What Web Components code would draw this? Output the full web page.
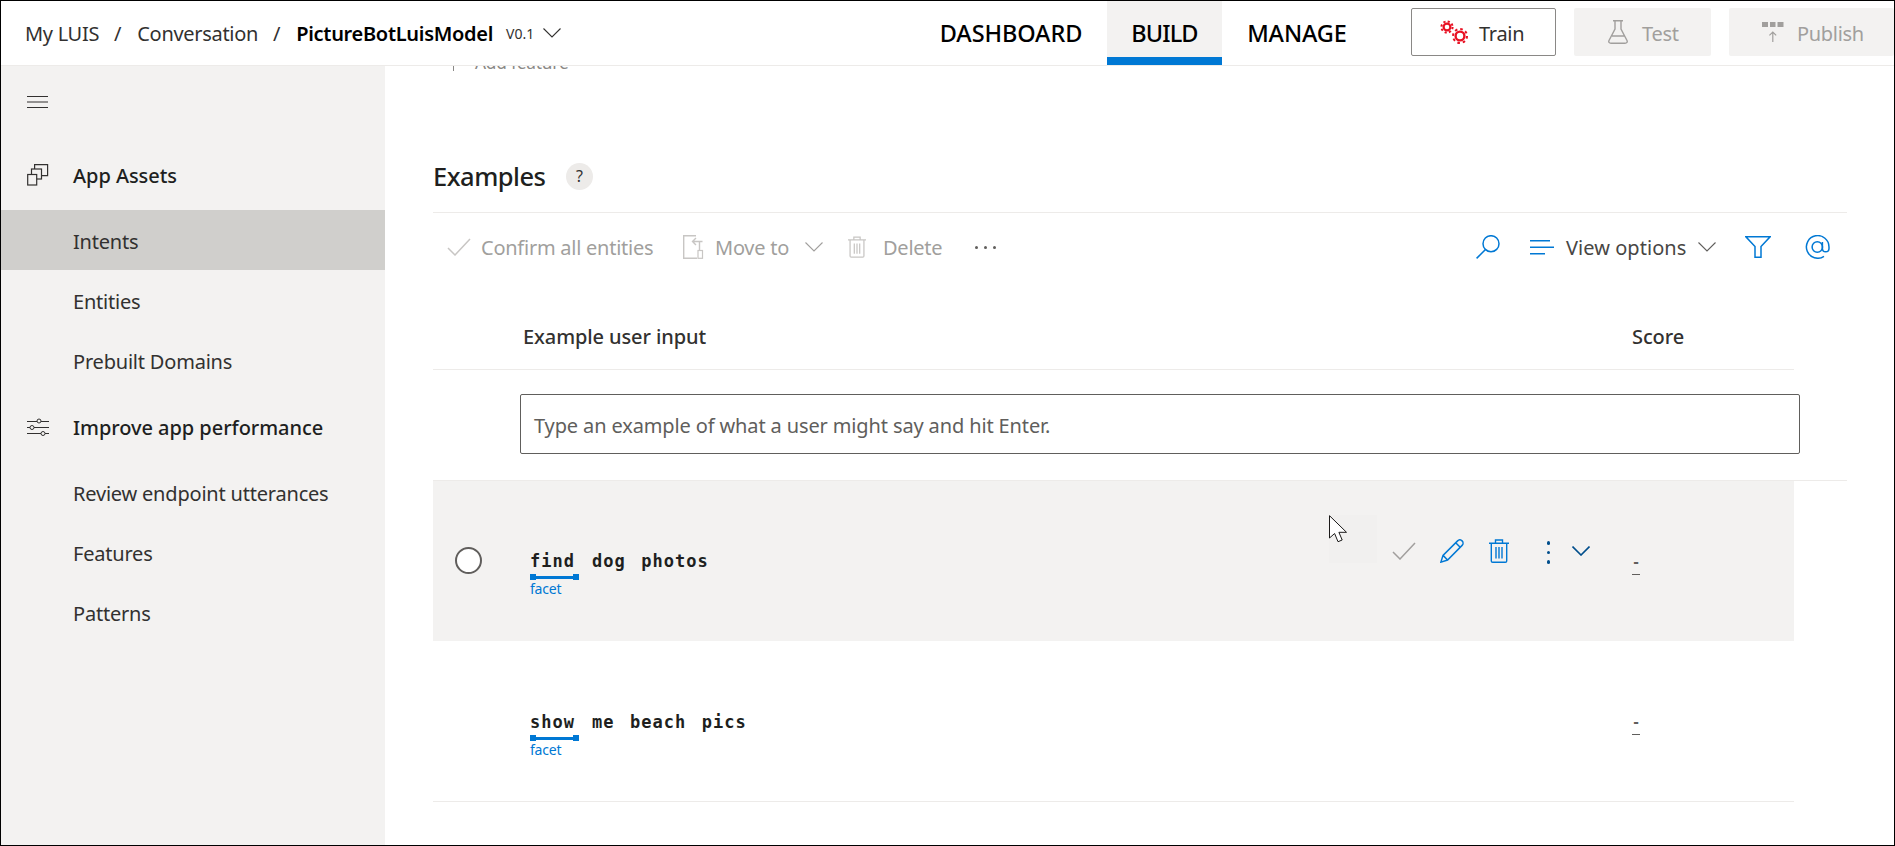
<!DOCTYPE html>
<html>
<head>
<meta charset="utf-8">
<title>LUIS - Intents</title>
<style>
  html, body { margin: 0; padding: 0; height: 100%; background: #fff; }
  body { font-family: "Noto Sans", "Liberation Sans", sans-serif; overflow: hidden; }
</style>
</head>
<body>
<luis-app></luis-app>
<script>
(function () {
  const BLUE = "#0078d4";
  const GREY = "#c8c6c4";

  // inline icons, sizes follow the screenshot
  const ICONS = {
    chevron: (w, h, c, sw = 1.1) => `<svg width="${w}" height="${h}" viewBox="0 0 18 10" fill="none" stroke="${c}" stroke-width="${sw}"><path d="M.5 .5 9 9 17.5 .5"/></svg>`,
    check: (c) => `<svg width="24" height="18" viewBox="0 0 24 18" fill="none" stroke="${c}" stroke-width="1.5"><path d="M1 10 8 17 23 1"/></svg>`,
    gears: () => `<svg width="33" height="30" viewBox="0 0 33 30" fill="none" stroke="#e81123">
      <circle cx="8" cy="10" r="3.4" stroke-width="2.2"/><circle cx="8" cy="10" r="5.6" stroke-width="2" stroke-dasharray="2.2 2.2"/>
      <circle cx="21" cy="19" r="4.4" stroke-width="2.4"/><circle cx="21" cy="19" r="7" stroke-width="2" stroke-dasharray="2.6 2.9"/></svg>`,
    flask: () => `<svg width="20" height="24" viewBox="0 0 20 24" fill="none" stroke="#a19f9d" stroke-width="1.4"><path d="M5 .7H15M7 .7V9L1 20.5C.3 22 1.2 23.3 3 23.3H17C18.8 23.3 19.7 22 19 20.5L13 9V.7M4 16H16"/></svg>`,
    publish: () => `<svg width="22" height="20" viewBox="0 0 22 20" fill="#a19f9d"><rect x="0" y="0" width="6" height="5"/><rect x="8" y="0" width="5.5" height="5"/><rect x="15.5" y="0" width="6" height="5"/><path d="M10.2 20V11.5L7.8 13.8 7 13 10.8 9.2 14.6 13 13.8 13.8 11.4 11.5V20Z"/></svg>`,
    menu: () => `<svg width="21" height="12" viewBox="0 0 21 12" stroke="#323130" stroke-width="1"><path d="M0 .5H21M0 6H21M0 11.5H21"/></svg>`,
    assets: () => `<svg width="22" height="22" viewBox="0 0 22 22" fill="none" stroke="#323130" stroke-width="1.2"><path d="M7.6 7.5V.7H20.6V11.7H14.5"/><rect x="4.5" y="5" width="10" height="10" fill="#f3f2f1"/><rect x=".7" y="10.5" width="9" height="10.5" fill="#f3f2f1"/></svg>`,
    sliders: () => `<svg width="22" height="19" viewBox="0 0 22 19" fill="none" stroke="#323130" stroke-width="1"><path d="M0 3.5H10M14 3.5H22M0 9.5H3M7 9.5H22M0 15.5H14M18 15.5H22"/><circle cx="12" cy="3" r="2"/><circle cx="5" cy="9.5" r="2"/><circle cx="16" cy="15.5" r="2"/></svg>`,
    move: () => `<svg width="21" height="24" viewBox="0 0 21 24" fill="none" stroke="${GREY}" stroke-width="1.4"><path d="M13 .7H.7V23.3H14M19.5 6.5H10M13 3 9.5 6.5 13 10M16.5 6.5V15"/><rect x="15" y="15.5" width="4.5" height="7.8" stroke-width="1.2"/></svg>`,
    trash: (w, h, c) => `<svg width="${w}" height="${h}" viewBox="0 0 20 24" fill="none" stroke="${c}" stroke-width="1.4"><path d="M0 4.2H20M6.5 4V1H13.5V4M2.3 4.2V22A1.3 1.3 0 0 0 3.6 23.3H16.4A1.3 1.3 0 0 0 17.7 22V4.2M7 8V19.5M10 8V19.5M13 8V19.5"/></svg>`,
    search: () => `<svg width="24" height="24" viewBox="0 0 24 24" fill="none" stroke="${BLUE}" stroke-width="1.5"><circle cx="15" cy="8.7" r="8"/><path d="M9.5 14.5 .6 23.4"/></svg>`,
    lines: () => `<svg width="24" height="15" viewBox="0 0 24 15" stroke="${BLUE}" stroke-width="1.5"><path d="M0 .8H20M0 7.2H24M0 13.8H15"/></svg>`,
    funnel: () => `<svg width="26" height="22" viewBox="0 0 26 22" fill="none" stroke="${BLUE}" stroke-width="1.5"><path d="M.9 .8H25.1L16 10.5V21.2H10V10.5Z"/></svg>`,
    at: () => `<svg width="25" height="24" viewBox="0 0 25 24" fill="none" stroke="${BLUE}" stroke-width="1.5"><path d="M19 21.3A11.3 11.3 0 1 1 24 12V13.5A3.3 3.3 0 0 1 17.4 13.5V7"/><circle cx="12.3" cy="12" r="5.2"/></svg>`,
    pencil: () => `<svg width="24" height="24" viewBox="0 0 24 24" fill="none" stroke="${BLUE}" stroke-width="1.5"><path d="M.9 23.1 3 16.4 17.6 1.9A2.9 2.9 0 0 1 22.1 6.4L7.6 21ZM3 16.4 7.6 21M15.7 3.8 20.2 8.3"/></svg>`,
    cursor: () => `<svg width="19" height="28" viewBox="0 0 19 28" fill="#fff" stroke="#1b1a19" stroke-width="1"><path d="M.5 .7V23L5.6 18.5 9 26.7 13.2 25 9.9 17.3H17.5Z"/></svg>`
  };

  class LuisHeader extends HTMLElement {
    constructor() {
      super();
      this.attachShadow({ mode: "open" });
      this.shadowRoot.innerHTML = `
        <style>
          :host { display: flex; height: 64px; border-bottom: 1px solid #edebe9; background: #fff; color: #323130; }
          .crumbs { flex: 1; display: flex; align-items: center; padding-left: 24px; font-size: 20px; letter-spacing: -.3px; white-space: nowrap; }
          .sep { margin: 0 16px 0 15px; }
          b { font-weight: 600; color: #000; }
          .ver { font-size: 14px; margin: 0 9px 0 13px; letter-spacing: 0; }
          .tabs { display: flex; }
          .tab { display: flex; align-items: center; justify-content: center; color: #000; font-size: 23.5px; font-weight: 500; letter-spacing: -.1px; box-sizing: border-box; height: 64px; }
          .tab.active { background: #f3f2f1; border-bottom: 8px solid ${BLUE}; padding-top: 8px; letter-spacing: -.9px; }
          .btns { display: flex; align-items: flex-start; padding: 7px 0 0 39px; gap: 18px; width: 522px; box-sizing: border-box; }
          .btn { height: 48px; box-sizing: border-box; border-radius: 2px; display: flex; align-items: center; font-size: 20px; letter-spacing: -.3px; background: #f3f2f1; color: #a19f9d; }
          .btn span { padding-top: 2px; }
          .train { width: 145px; background: #fff; border: 1px solid #8a8886; color: #323130; padding-left: 27px; gap: 7px; }
          .test { width: 137px; padding-left: 34px; gap: 14px; }
          .publish { flex: 1; padding-left: 33px; gap: 13px; }
          svg { flex: none; }
        </style>
        <div class="crumbs">
          <span>My LUIS</span><span class="sep">/</span><span>Conversation</span><span class="sep">/</span><b>PictureBotLuisModel</b>
          <span class="ver">V0.1</span>${ICONS.chevron(18, 10, "#323130")}
        </div>
        <div class="tabs">
          <div class="tab" style="width:192px">DASHBOARD</div>
          <div class="tab active" style="width:115px">BUILD</div>
          <div class="tab" style="width:150px">MANAGE</div>
        </div>
        <div class="btns">
          <div class="btn train">${ICONS.gears()}<span>Train</span></div>
          <div class="btn test">${ICONS.flask()}<span>Test</span></div>
          <div class="btn publish">${ICONS.publish()}<span>Publish</span></div>
        </div>`;
    }
  }
  customElements.define("luis-header", LuisHeader);

  class SideItem extends HTMLElement {
    constructor() {
      super();
      this.attachShadow({ mode: "open" });
      const icon = this.getAttribute("icon");
      this.shadowRoot.innerHTML = `
        <style>
          :host { display: flex; align-items: center; height: 60px; padding-left: 72px; font-size: 20px; letter-spacing: -.2px; color: #323130; white-space: nowrap; }
          :host([head]) { font-weight: 500; color: #201f1e; margin-bottom: 5px; padding-left: 26px; letter-spacing: -.05px; }
          :host([active]) { background: #d0cfcc; }
          .ic { width: 46px; display: flex; align-items: center; }
          .tx { padding-top: 3px; }
          :host([head]) .tx { padding-top: 1px; }
        </style>
        ${icon ? `<span class="ic">${ICONS[icon]()}</span>` : ""}<span class="tx"><slot></slot></span>`;
    }
  }
  customElements.define("side-item", SideItem);

  class LuisSidebar extends HTMLElement {
    constructor() {
      super();
      this.attachShadow({ mode: "open" });
      this.shadowRoot.innerHTML = `
        <style>
          :host { display: block; width: 384px; flex: none; background: #f3f2f1; }
          .menu { height: 79px; display: flex; align-items: flex-start; padding: 30px 0 0 26px; box-sizing: border-box; }
        </style>
        <div class="menu">${ICONS.menu()}</div>
        <slot></slot>`;
    }
  }
  customElements.define("luis-sidebar", LuisSidebar);

  class ExamplesToolbar extends HTMLElement {
    constructor() {
      super();
      this.attachShadow({ mode: "open" });
      this.shadowRoot.innerHTML = `
        <style>
          :host { display: flex; align-items: center; height: 68px; width: 1414px; font-size: 20px; letter-spacing: -.25px; white-space: nowrap; }
          .off { color: #a19f9d; }
          .on { color: #484644; letter-spacing: .05px; }
          .l, .r { display: flex; align-items: center; }
          .r { margin-left: auto; }
          .dots { display: flex; gap: 6px; margin-left: 34px; }
          .dots i { width: 3px; height: 3px; border-radius: 50%; background: #605e5c; }
        </style>
        <div class="l off">
          <span style="margin:0 10px 0 14px;display:flex">${ICONS.check(GREY)}</span>
          <span style="width:174px">Confirm all entities</span>
          <span style="margin:0 11px 0 28px;display:flex">${ICONS.move()}</span>
          <span style="width:78px">Move to</span>
          <span style="margin:0 25px 0 12px;display:flex">${ICONS.chevron(18, 10, "#a19f9d")}</span>
          <span style="margin-right:17px;display:flex">${ICONS.trash(18, 24, GREY)}</span>
          <span style="width:58px">Delete</span>
          <span class="dots"><i></i><i></i><i></i></span>
        </div>
        <div class="r on">
          ${ICONS.search()}
          <span style="margin:0 12px 0 30px;display:flex">${ICONS.lines()}</span>
          <span style="width:120px">View options</span>
          <span style="margin:0 29px 0 12px;display:flex">${ICONS.chevron(18, 10, "#605e5c")}</span>
          ${ICONS.funnel()}
          <span style="margin:0 17px 0 34px;display:flex">${ICONS.at()}</span>
        </div>`;
    }
  }
  customElements.define("examples-toolbar", ExamplesToolbar);

  class UtteranceToken extends HTMLElement {
    constructor() {
      super();
      this.attachShadow({ mode: "open" });
      const entity = this.getAttribute("entity");
      this.shadowRoot.innerHTML = `
        <style>
          :host { display: flex; flex-direction: column; align-items: flex-start; margin-right: 15.5px; }
          :host([entity]) { margin-right: 13px; }
          .text { font: 700 17px/24px "DejaVu Sans Mono", "Liberation Mono", monospace; letter-spacing: 1px; color: #201f1e; white-space: pre; }
          .bar { width: 49px; height: 6px; margin-top: 1px; background: linear-gradient(${BLUE}, ${BLUE}) center / 100% 3px no-repeat; display: flex; justify-content: space-between; }
          .bar i { width: 6px; height: 6px; background: ${BLUE}; }
          .name { font-size: 14px; line-height: 17px; color: ${BLUE}; letter-spacing: -.2px; }
        </style>
        <span class="text"><slot></slot></span>
        ${entity ? `<span class="bar"><i></i><i></i></span><span class="name">${entity}</span>` : ""}`;
    }
  }
  customElements.define("utterance-token", UtteranceToken);

  class ExampleRow extends HTMLElement {
    constructor() {
      super();
      this.attachShadow({ mode: "open" });
      const hover = this.hasAttribute("hover");
      this.shadowRoot.innerHTML = `
        <style>
          :host { display: flex; width: 1361px; height: 160px; box-sizing: border-box; }
          :host([hover]) { background: #f3f2f1; }
          :host(:not([hover])) { height: 161px; border-bottom: 1px solid #edebe9; }
          .pick { width: 97px; flex: none; display: flex; align-items: center; padding: 0 0 2px 22px; box-sizing: border-box; }
          .radio { width: 27px; height: 27px; box-sizing: border-box; border: 2px solid #605e5c; border-radius: 50%; background: #fff; }
          .tokens { flex: 1; display: flex; align-items: flex-start; padding-top: 68px; }
          :host(:not([hover])) .tokens { padding-top: 69px; }
          .actions { display: flex; align-items: flex-start; margin-right: 42px; padding-top: 35px; }
          .hov { width: 48px; height: 48px; background: #f1f0ef; position: relative; margin: -1px 15px 0 0; }
          .hov svg { position: absolute; left: 0; top: 0; }
          .a { display: flex; }
          .dots { display: flex; flex-direction: column; gap: 6px; margin: 25px 22px 0 38px; }
          .dots i { width: 3.5px; height: 3.5px; background: #004e8c; border-radius: 50%; }
          .score { width: 162px; flex: none; padding-top: 68px; box-sizing: border-box; }
          .score span { display: block; width: 8px; height: 25px; line-height: 25px; border-bottom: 1px solid #605e5c; color: #605e5c; text-align: center; font-size: 16px; font-weight: 700; }
        </style>
        <div class="pick">${hover ? `<div class="radio"></div>` : ""}</div>
        <div class="tokens"><slot></slot></div>
        ${hover ? `<div class="actions">
          <div class="hov">${ICONS.cursor()}</div>
          <span class="a" style="margin-top:26px">${ICONS.check("#a19f9d")}</span>
          <span class="a" style="margin:23px 0 0 24px">${ICONS.pencil()}</span>
          <span class="a" style="margin:23px 0 0 25px">${ICONS.trash(20, 24, BLUE)}</span>
          <span class="dots"><i></i><i></i><i></i></span>
          <span class="a" style="margin-top:30px">${ICONS.chevron(18, 10, "#004e8c", 1.6)}</span>
        </div>` : ""}
        <div class="score"><span>-</span></div>`;
    }
  }
  customElements.define("example-row", ExampleRow);

  class ExamplesPanel extends HTMLElement {
    constructor() {
      super();
      this.attachShadow({ mode: "open" });
      this.shadowRoot.innerHTML = `
        <style>
          :host { display: flex; flex-direction: column; flex: 1; min-width: 0; overflow: hidden; padding-left: 48px; background: #fff; color: #323130; }
          .add { display: flex; align-items: center; height: 24px; margin-top: -16px; font-size: 17.3px; color: #8a8886; white-space: nowrap; }
          .add span { margin-left: 21px; letter-spacing: -.2px; }
          .add i { display: block; width: 1px; height: 18px; margin: 0 0 -0px 20px; background: #8a8886; }
          .title { display: flex; align-items: center; width: 1414px; height: 40px; margin-top: 82px; padding-bottom: 16px; border-bottom: 1px solid #edebe9; }
          h2 { margin: 0; width: 113px; font-size: 25.5px; font-weight: 500; color: #201f1e; letter-spacing: -.5px; white-space: nowrap; }
          .help { width: 27px; height: 27px; border-radius: 50%; background: #edebe9; margin-left: 20px; display: flex; align-items: center; justify-content: center; font-size: 16px; color: #323130; }
          .cols { display: flex; width: 1361px; height: 66px; padding-top: 22px; align-items: center; border-bottom: 1px solid #edebe9; font-size: 20px; font-weight: 500; letter-spacing: -.1px; }
          .cols .a { margin-left: 90px; flex: 1; }
          .cols .b { width: 162px; }
          .input-row { width: 1414px; height: 111px; box-sizing: border-box; border-bottom: 1px solid #edebe9; padding: 24px 0 0 87px; }
          .input { width: 1280px; height: 60px; box-sizing: border-box; border: 1px solid #605e5c; border-radius: 2px; display: flex; align-items: center; padding: 2px 0 0 13px; font-size: 20px; letter-spacing: -.13px; color: #605e5c; }
        </style>
        <div class="add"><i></i><span>Add feature</span></div>
        <div class="title"><h2>Examples</h2><span class="help">?</span></div>
        <examples-toolbar></examples-toolbar>
        <div class="cols"><span class="a">Example user input</span><span class="b">Score</span></div>
        <div class="input-row"><div class="input">Type an example of what a user might say and hit Enter.</div></div>
        <example-row hover>
          <utterance-token entity="facet">find</utterance-token>
          <utterance-token>dog</utterance-token>
          <utterance-token>photos</utterance-token>
        </example-row>
        <example-row>
          <utterance-token entity="facet">show</utterance-token>
          <utterance-token>me</utterance-token>
          <utterance-token>beach</utterance-token>
          <utterance-token>pics</utterance-token>
        </example-row>`;
    }
  }
  customElements.define("examples-panel", ExamplesPanel);

  class LuisApp extends HTMLElement {
    constructor() {
      super();
      this.attachShadow({ mode: "open" });
      this.shadowRoot.innerHTML = `
        <style>
          :host { display: flex; flex-direction: column; width: 1895px; height: 846px; box-sizing: border-box; border: 1px solid #000; overflow: hidden; background: #fff; }
          .body { display: flex; flex: 1; min-height: 0; }
        </style>
        <luis-header></luis-header>
        <div class="body">
          <luis-sidebar>
            <side-item head icon="assets">App Assets</side-item>
            <side-item active>Intents</side-item>
            <side-item>Entities</side-item>
            <side-item>Prebuilt Domains</side-item>
            <side-item head icon="sliders" style="margin-top:7px">Improve app performance</side-item>
            <side-item>Review endpoint utterances</side-item>
            <side-item>Features</side-item>
            <side-item>Patterns</side-item>
          </luis-sidebar>
          <examples-panel></examples-panel>
        </div>`;
    }
  }
  customElements.define("luis-app", LuisApp);
})();
</script>
</body>
</html>
